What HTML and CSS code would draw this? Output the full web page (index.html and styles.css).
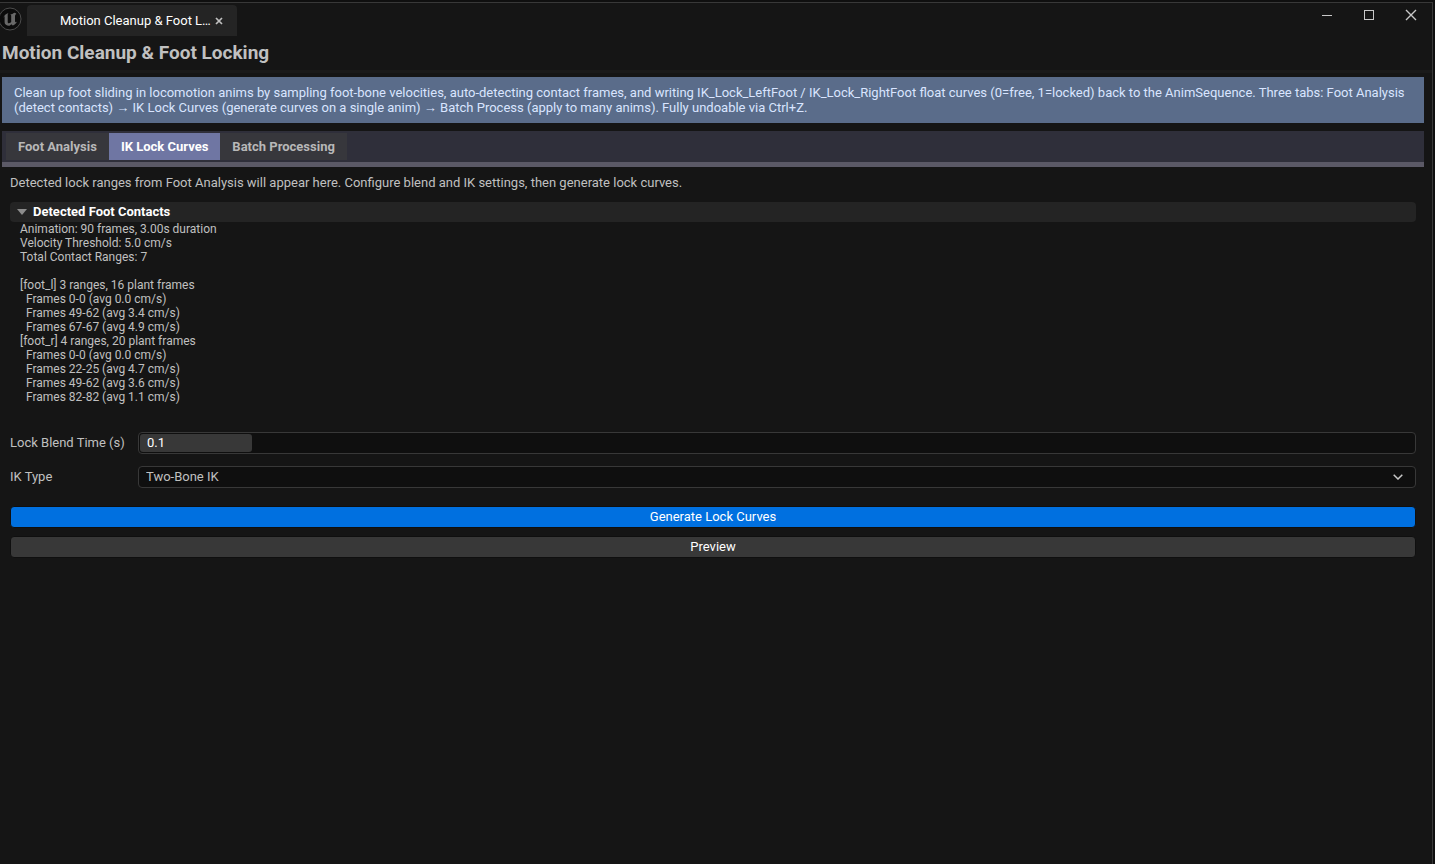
FILE: index.html
```html
<!DOCTYPE html>
<html lang="en">
<head>
    <meta charset="UTF-8">
    <title>Motion Cleanup &amp; Foot Locking</title>
    <link rel="stylesheet" href="styles.css">
</head>
<body>
    <div class="window">
        <header class="titlebar">
            <svg class="logo" viewBox="0 0 24 24" aria-hidden="true">
                <circle cx="12" cy="12" r="11" fill="#0b0b0b" stroke="#4c4c4c"/>
                <path d="M5.200 11.200C6 8.600 8 6.600 10.600 6c-.6.5-.9 1-.9 1.700v7.200c0 .8.5 1.300 1.200 1.300.9 0 1.700-.5 2.300-1.200V9c0-.8-.4-1.200-1-1.400 1.500-.2 2.800-.8 4-1.800.8.100 1.600.5 2.300 1.100-1 .3-1.500 1.100-1.500 2.400v4.900c0 .7.3 1 .8 1 .4 0 .8-.3 1.200-.8-.9 2-2.500 3.500-4.300 4.100l-1.300-1.300-1.900 1.600c-2.700.2-4.900-1.300-4.900-3.600V9.900c0-.5-.2-.7-.5-.6-.4.1-.6.900-.9 1.900z" fill="#686868"/>
            </svg>
            <div class="window-tab">
                <span class="window-tab-name">Motion Cleanup &amp; Foot L…</span>
                <button class="tab-close" type="button" aria-label="Close tab">
                    <svg viewBox="0 0 8 8" width="8" height="8"><path d="M1 1l6 6M7 1l-6 6" stroke="#c0c0c0" stroke-width="1.700" fill="none"/></svg>
                </button>
            </div>
            <div class="window-controls">
                <button type="button" aria-label="Minimize">
                    <svg viewBox="0 0 12 12" width="12" height="12"><path d="M1 6.500h10" stroke="#c8c8c8" fill="none"/></svg>
                </button>
                <button type="button" aria-label="Maximize">
                    <svg viewBox="0 0 12 12" width="12" height="12"><rect x="1.500" y="1.500" width="9" height="9" stroke="#c8c8c8" fill="none"/></svg>
                </button>
                <button type="button" aria-label="Close">
                    <svg viewBox="0 0 12 12" width="12" height="12"><path d="M1 1l10 10M11 1L1 11" stroke="#c8c8c8" stroke-width="1.400" fill="none"/></svg>
                </button>
            </div>
        </header>

        <h1 class="page-title">Motion Cleanup &amp; Foot Locking</h1>

        <main class="tool">
            <p class="info">Clean up foot sliding in locomotion anims by sampling foot-bone velocities, auto-detecting contact frames, and writing IK_Lock_LeftFoot / IK_Lock_RightFoot float curves (0=free, 1=locked) back to the AnimSequence. Three tabs: Foot Analysis (detect contacts) → IK Lock Curves (generate curves on a single anim) → Batch Process (apply to many anims). Fully undoable via Ctrl+Z.</p>

            <nav class="tabs">
                <button class="tab" type="button">Foot Analysis</button>
                <button class="tab active" type="button">IK Lock Curves</button>
                <button class="tab" type="button">Batch Processing</button>
            </nav>

            <section class="panel">
                <p class="hint">Detected lock ranges from Foot Analysis will appear here. Configure blend and IK settings, then generate lock curves.</p>

                <details class="contacts" open>
                    <summary><svg viewBox="0 0 10 6" width="10" height="6" aria-hidden="true"><path d="M0 0h10L5 6z" fill="#8c8c8c"/></svg>Detected Foot Contacts</summary>
                    <pre class="report">Animation: 90 frames, 3.00s duration
Velocity Threshold: 5.0 cm/s
Total Contact Ranges: 7

[foot_l] 3 ranges, 16 plant frames
  Frames 0-0 (avg 0.0 cm/s)
  Frames 49-62 (avg 3.4 cm/s)
  Frames 67-67 (avg 4.9 cm/s)
[foot_r] 4 ranges, 20 plant frames
  Frames 0-0 (avg 0.0 cm/s)
  Frames 22-25 (avg 4.7 cm/s)
  Frames 49-62 (avg 3.6 cm/s)
  Frames 82-82 (avg 1.1 cm/s)</pre>
                </details>

                <form class="settings">
                    <label for="blendTime">Lock Blend Time (s)</label>
                    <div class="field spin">
                        <input id="blendTime" type="text" value="0.1">
                    </div>
                    <label for="ikType">IK Type</label>
                    <div class="select-wrap">
                        <select class="field" id="ikType">
                            <option>Two-Bone IK</option>
                        </select>
                        <svg class="chevron" viewBox="0 0 10 6" width="10" height="6" aria-hidden="true"><path d="M.7.7L5 5 9.300.7" stroke="#c8c8c8" stroke-width="1.500" fill="none"/></svg>
                    </div>
                </form>

                <div class="actions">
                    <button class="btn primary" type="button">Generate Lock Curves</button>
                    <button class="btn" type="button">Preview</button>
                </div>
            </section>
        </main>
    </div>
</body>
</html>
```

FILE: styles.css
```css
* {
    box-sizing: border-box;
}
body {
    margin: 0;
    background-color: #0f0f0f;
    color: #c0c0c0;
    font-family: Roboto, sans-serif;
    font-size: 13px;
    line-height: 15px;
}
button, input, select {
    font: inherit;
    color: inherit;
    margin: 0;
}
button {
    border: none;
    padding: 0;
    background: none;
}
svg {
    display: block;
}
.window {
    min-height: calc(100vh - 2px);
    margin: 2px 2px 0 0;
    background-color: #151515;
    border-top: 1px solid #383838;
    border-right: 1px solid #383838;
}

/* Title bar */
.titlebar {
    display: flex;
    height: 33px;
}
.logo {
    width: 24px;
    height: 24px;
    margin: 4px 5px 0 -2px;
}
.window-tab {
    display: flex;
    align-items: center;
    justify-content: space-between;
    width: 210px;
    margin-top: 2px;
    padding: 0 14px 0 33px;
    background-color: #242424;
    border-radius: 4px 4px 0 0;
    color: #fff;
}
.window-controls {
    display: flex;
    align-items: flex-start;
    gap: 30px;
    margin-left: auto;
    padding: 6px 15px 0 0;
}

.page-title {
    margin: 0;
    padding: 6px 2px;
    border-bottom: 3px solid #1a1a1a;
    font-size: 19px;
    line-height: 22px;
}

.tool {
    margin: 4px 8px 0 2px;
}
.info {
    margin: 0 0 8px;
    padding: 8px 12px;
    background-color: #5a6c8a;
    color: #d9e5ff;
}

/* Tabs */
.tabs {
    display: flex;
    padding: 2px 4px;
    background-color: #2f2f3a;
    border-bottom: 5px solid #5b5966;
}
.tab {
    padding: 6px 12px;
    background-color: #37373c;
    color: #b8b8b8;
    font-weight: bold;
}
.tab.active {
    background-color: #6f76a3;
    color: #fff;
}

.panel {
    padding: 8px;
}
.hint {
    margin: 0 0 12px;
}
.contacts summary {
    display: flex;
    align-items: center;
    gap: 6px;
    height: 20px;
    padding: 0 7px 1px;
    background-color: #242424;
    border-radius: 4px;
    color: #fff;
    font-weight: bold;
    list-style: none;
}
.report {
    margin: 0;
    padding: 0 10px;
    font-family: inherit;
    font-size: 12px;
    line-height: 14px;
}

/* Settings */
.settings {
    display: grid;
    grid-template-columns: 116px 1fr;
    align-items: center;
    gap: 12px;
    margin-top: 28px;
}
.settings label {
    padding-bottom: 2px;
}
.field {
    display: block;
    width: 100%;
    height: 22px;
    padding: 0 7px 2px;
    background-color: #0f0f0f;
    border: 1px solid #383838;
    border-radius: 4px;
    appearance: none;
}
.spin {
    padding: 1px;
}
.spin input {
    display: block;
    width: 112px;
    height: 18px;
    padding: 0 7px 2px;
    background-color: #383838;
    border: none;
    border-radius: 3px;
    color: #fff;
}
.select-wrap {
    position: relative;
}
.chevron {
    position: absolute;
    top: 8px;
    right: 13px;
    pointer-events: none;
}

.actions {
    display: flex;
    flex-direction: column;
    gap: 8px;
    margin-top: 18px;
}
.btn {
    height: 22px;
    padding-bottom: 2px;
    background-color: #383838;
    border: 1px solid #0f0f0f;
    border-radius: 4px;
    color: #fff;
}
.primary {
    background-color: #0070e0;
}
```
